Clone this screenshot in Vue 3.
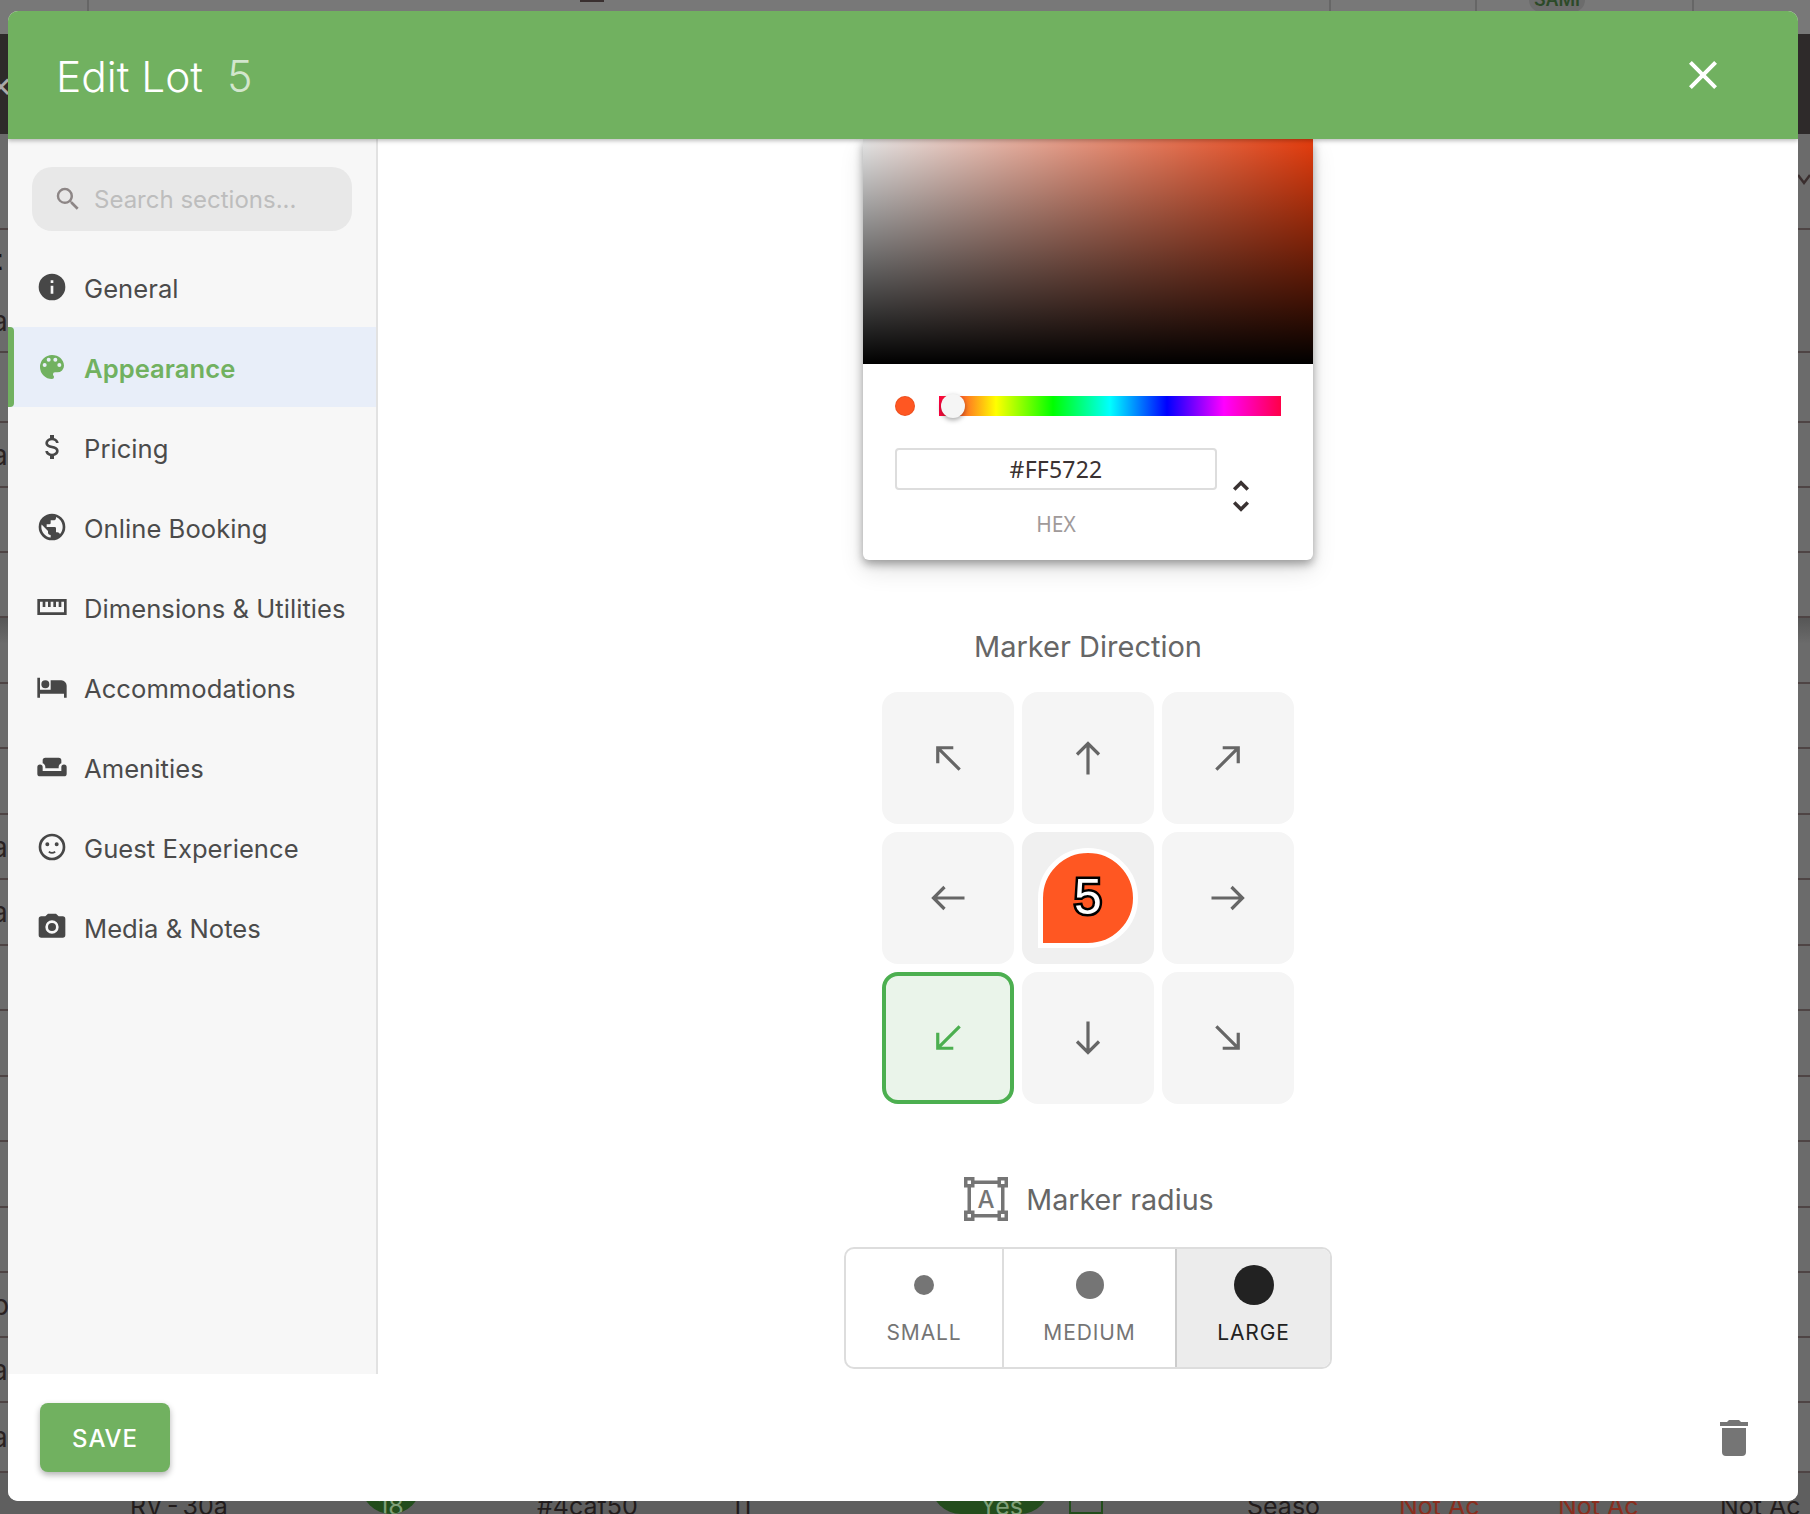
<template>
  <div class="page">
    <!-- table behind the dialog -->
    <div class="backdrop">
      <div class="top-band">
        <span v-for="c in topCells" :key="c.w" class="top-cell" :style="{ width: c.w + 'px' }">
          <span v-if="c.bar" class="top-bar"></span>
          <span v-if="c.pill" class="top-pill">SAMI</span>
        </span>
      </div>
      <div class="dark-band"><span>×</span></div>
      <div
        v-for="(row, i) in bgRows"
        :key="i"
        class="bg-row"
        :class="{ 'no-line': row.noLine, shade: row.shade }"
        :style="{ height: row.h + 'px' }"
      >
        <span class="bg-left" :class="{ strong: row.strong }">{{ row.l }}</span>
        <svg v-if="row.chevron" class="bg-chevron" viewBox="0 0 12 16"><polyline points="0,2 6,10 12,2" /></svg>
      </div>
      <div class="bg-last">
        <span
          v-for="c in lastCells"
          :key="c.left"
          class="bg-cell"
          :class="c.cls"
          :style="{ width: c.w + 'px' }"
        >{{ c.text }}</span>
      </div>
    </div>

    <div class="dialog">
      <header class="dialog-head">
        <h1>Edit Lot</h1>
        <span class="lot-no">5</span>
        <svg class="close" viewBox="0 0 24 24"><path :d="icons.close" /></svg>
      </header>

      <div class="dialog-body">
        <aside class="sidebar">
          <div class="search">
            <svg viewBox="0 0 24 24"><path :d="icons.magnify" /></svg>
            <span>Search sections...</span>
          </div>
          <div
            v-for="item in sections"
            :key="item.name"
            class="nav-item"
            :class="{ active: item.name === 'Appearance' }"
          >
            <svg viewBox="0 0 24 24">
              <path :d="icons[item.icon]" />
              <path v-if="item.icon === 'smile'" class="mouth" d="M9.6,15.6C11,16.6 13,16.6 14.4,15.6" />
            </svg>
            <span class="nav-text">{{ item.name }}</span>
          </div>
        </aside>

        <main class="content">
          <div class="picker">
            <div class="picker-canvas"></div>
            <div class="picker-panel">
              <div class="hue-row">
                <span class="hue-dot"></span>
                <div class="hue-track"><span class="hue-knob"></span></div>
              </div>
              <div class="hex-row">
                <div class="hex-col">
                  <div class="hex-input">#FF5722</div>
                  <div class="hex-label">HEX</div>
                </div>
                <svg class="hex-switch" viewBox="0 0 24 24"><path :d="icons.unfold" /></svg>
              </div>
            </div>
          </div>

          <div class="direction-title">Marker Direction</div>
          <div class="direction-grid">
            <div
              v-for="d in directions"
              :key="d.id"
              class="dir-btn"
              :class="{ selected: d.id === 'sw', center: d.id === 'c' }"
            >
              <div v-if="d.id === 'c'" class="marker"><span>5</span></div>
              <svg v-else class="arrow" viewBox="0 0 32 36" :style="{ transform: `rotate(${d.deg}deg)` }">
                <path d="M16,34.5V4M5,14.5L16,3.5L27,14.5" />
              </svg>
            </div>
          </div>

          <div class="radius-title">
            <svg viewBox="0 0 44 44">
              <path class="frame" d="M10,5.25H34M10,38.75H34M5.25,10V34M38.75,10V34" />
              <rect x="1.75" y="1.75" width="7" height="7" />
              <rect x="35.25" y="1.75" width="7" height="7" />
              <rect x="1.75" y="35.25" width="7" height="7" />
              <rect x="35.25" y="35.25" width="7" height="7" />
              <text x="22" y="31" text-anchor="middle">A</text>
            </svg>
            <span>Marker radius</span>
          </div>
          <div class="radius-toggle">
            <div
              v-for="r in radii"
              :key="r.label"
              class="radius-btn"
              :class="{ on: r.label === 'LARGE' }"
            >
              <span class="dot-box"><span class="dot" :style="{ width: r.size + 'px', height: r.size + 'px' }"></span></span>
              <span class="radius-label">{{ r.label }}</span>
            </div>
          </div>
        </main>
      </div>

      <footer class="dialog-foot">
        <button class="save">SAVE</button>
        <svg class="trash" viewBox="0 0 24 24"><path :d="icons.trash" /></svg>
      </footer>
    </div>
  </div>
</template>

<script setup>
const icons = {
  close: 'M19,6.41L17.59,5L12,10.59L6.41,5L5,6.41L10.59,12L5,17.59L6.41,19L12,13.41L17.59,19L19,17.59L13.41,12L19,6.41Z',
  magnify: 'M9.5,3A6.5,6.5 0 0,1 16,9.5C16,11.11 15.41,12.59 14.44,13.73L14.71,14H15.5L20.5,19L19,20.5L14,15.5V14.71L13.73,14.44C12.59,15.41 11.11,16 9.5,16A6.5,6.5 0 0,1 3,9.5A6.5,6.5 0 0,1 9.5,3M9.5,5C7,5 5,7 5,9.5C5,12 7,14 9.5,14C12,14 14,12 14,9.5C14,7 12,5 9.5,5Z',
  info: 'M13,9H11V7H13M13,17H11V11H13M12,2A10,10 0 0,0 2,12A10,10 0 0,0 12,22A10,10 0 0,0 22,12A10,10 0 0,0 12,2Z',
  palette: 'M17.5,12A1.5,1.5 0 0,1 16,10.5A1.5,1.5 0 0,1 17.5,9A1.5,1.5 0 0,1 19,10.5A1.5,1.5 0 0,1 17.5,12M14.5,8A1.5,1.5 0 0,1 13,6.5A1.5,1.5 0 0,1 14.5,5A1.5,1.5 0 0,1 16,6.5A1.5,1.5 0 0,1 14.5,8M9.5,8A1.5,1.5 0 0,1 8,6.5A1.5,1.5 0 0,1 9.5,5A1.5,1.5 0 0,1 11,6.5A1.5,1.5 0 0,1 9.5,8M6.5,12A1.5,1.5 0 0,1 5,10.5A1.5,1.5 0 0,1 6.5,9A1.5,1.5 0 0,1 8,10.5A1.5,1.5 0 0,1 6.5,12M12,3A9,9 0 0,0 3,12A9,9 0 0,0 12,21A1.5,1.5 0 0,0 13.5,19.5C13.5,19.11 13.35,18.76 13.11,18.5C12.88,18.23 12.73,17.88 12.73,17.5A1.5,1.5 0 0,1 14.23,16H16A5,5 0 0,0 21,11C21,6.58 16.97,3 12,3Z',
  dollar: 'M7,15H9C9,16.08 10.37,17 12,17C13.63,17 15,16.08 15,15C15,13.9 13.96,13.5 11.76,12.97C9.64,12.44 7,11.78 7,9C7,7.21 8.47,5.69 10.5,5.18V3H13.5V5.18C15.53,5.69 17,7.21 17,9H15C15,7.92 13.63,7 12,7C10.37,7 9,7.92 9,9C9,10.1 10.04,10.5 12.24,11.03C14.36,11.56 17,12.22 17,15C17,16.79 15.53,18.31 13.5,18.82V21H10.5V18.82C8.47,18.31 7,16.79 7,15Z',
  earth: 'M17.9,17.39C17.64,16.59 16.89,16 16,16H15V13A1,1 0 0,0 14,12H8V10H10A1,1 0 0,0 11,9V7H13A2,2 0 0,0 15,5V4.59C17.93,5.77 20,8.64 20,12C20,14.08 19.2,15.97 17.9,17.39M11,19.93C7.05,19.44 4,16.08 4,12C4,11.38 4.08,10.78 4.21,10.21L9,15V16A2,2 0 0,0 11,18M12,2A10,10 0 0,0 2,12A10,10 0 0,0 12,22A10,10 0 0,0 22,12A10,10 0 0,0 12,2Z',
  ruler: 'M1,6V18H23V6H1M21,16H3V8H5V12H7V8H9V12H11V8H13V12H15V8H17V12H19V8H21V16Z',
  bed: 'M19,7H11V14H3V5H1V20H3V17H21V20H23V11A4,4 0 0,0 19,7M7,13A3,3 0 0,0 10,10A3,3 0 0,0 7,7A3,3 0 0,0 4,10A3,3 0 0,0 7,13Z',
  sofa: 'M7,5H17A2,2 0 0,1 19,7V9.2C17.84,9.6 17,10.7 17,12V13H7V12C7,10.7 6.16,9.6 5,9.2V7A2,2 0 0,1 7,5ZM3,10.2A2,2 0 0,1 5,12.2V15H19V12.2A2,2 0 0,1 21,10.2A2,2 0 0,1 23,12.2V17A2,2 0 0,1 21,19H3A2,2 0 0,1 1,17V12.2A2,2 0 0,1 3,10.2Z',
  smile: 'M12,2A10,10 0 0,0 2,12A10,10 0 0,0 12,22A10,10 0 0,0 22,12A10,10 0 0,0 12,2M12,20A8,8 0 0,1 4,12A8,8 0 0,1 12,4A8,8 0 0,1 20,12A8,8 0 0,1 12,20M8.5,8.5A1.5,1.5 0 0,0 7,10A1.5,1.5 0 0,0 8.5,11.5A1.5,1.5 0 0,0 10,10A1.5,1.5 0 0,0 8.5,8.5M15.5,8.5A1.5,1.5 0 0,0 14,10A1.5,1.5 0 0,0 15.5,11.5A1.5,1.5 0 0,0 17,10A1.5,1.5 0 0,0 15.5,8.5Z',
  camera: 'M4,4H7L9,2H15L17,4H20A2,2 0 0,1 22,6V18A2,2 0 0,1 20,20H4A2,2 0 0,1 2,18V6A2,2 0 0,1 4,4M12,7A5,5 0 0,0 7,12A5,5 0 0,0 12,17A5,5 0 0,0 17,12A5,5 0 0,0 12,7M12,9A3,3 0 0,1 15,12A3,3 0 0,1 12,15A3,3 0 0,1 9,12A3,3 0 0,1 12,9Z',
  unfold: 'M12,18.17L8.83,15L7.41,16.41L12,21L16.59,16.41L15.17,15M12,5.83L15.17,9L16.59,7.59L12,3L7.41,7.59L8.83,9L12,5.83Z',
  trash: 'M19,4H15.5L14.5,3H9.5L8.5,4H5V6H19M6,19A2,2 0 0,0 8,21H16A2,2 0 0,0 18,19V7H6V19Z'
}

const sections = [
  { name: 'General', icon: 'info' },
  { name: 'Appearance', icon: 'palette' },
  { name: 'Pricing', icon: 'dollar' },
  { name: 'Online Booking', icon: 'earth' },
  { name: 'Dimensions & Utilities', icon: 'ruler' },
  { name: 'Accommodations', icon: 'bed' },
  { name: 'Amenities', icon: 'sofa' },
  { name: 'Guest Experience', icon: 'smile' },
  { name: 'Media & Notes', icon: 'camera' }
]

const directions = [
  { id: 'nw', deg: -45 },
  { id: 'n', deg: 0 },
  { id: 'ne', deg: 45 },
  { id: 'w', deg: -90 },
  { id: 'c', deg: 0 },
  { id: 'e', deg: 90 },
  { id: 'sw', deg: -135 },
  { id: 's', deg: 180 },
  { id: 'se', deg: 135 }
]

const radii = [
  { label: 'SMALL', size: 20 },
  { label: 'MEDIUM', size: 28 },
  { label: 'LARGE', size: 40 }
]

// background table, only the bits showing around the dialog
const topCells = [
  { w: 89 },
  { w: 1242, bar: true },
  { w: 146 },
  { w: 217, pill: true }
]
const bgRows = [
  { h: 96, l: '', chevron: true },
  { h: 60, l: 't', noLine: true, strong: true },
  { h: 63, l: 'a' },
  { h: 70, l: '' },
  { h: 65, l: 'a' },
  { h: 65, l: '' },
  { h: 65, l: '' },
  { h: 66, l: '', shade: true },
  { h: 65, l: '' },
  { h: 66, l: '' },
  { h: 65, l: 'a' },
  { h: 66, l: 'a' },
  { h: 65, l: '' },
  { h: 66, l: '' },
  { h: 65, l: '' },
  { h: 66, l: '' },
  { h: 65, l: '' },
  { h: 65, l: 'b' },
  { h: 65, l: 'a' },
  { h: 70, l: 'a' }
]
const lastCells = [
  { left: 0, w: 130, text: '' },
  { left: 130, w: 231, text: 'RV - 30a', cls: 'tight' },
  { left: 361, w: 60, text: '18', cls: 'green drop' },
  { left: 421, w: 84, text: '' },
  { left: 505, w: 23, text: '', cls: 'swatch' },
  { left: 528, w: 9, text: '' },
  { left: 537, w: 194, text: '#4caf50' },
  { left: 731, w: 200, text: '11' },
  { left: 931, w: 119, text: 'Yes', cls: 'green pill' },
  { left: 1050, w: 19, text: '' },
  { left: 1069, w: 34, text: '', cls: 'box' },
  { left: 1103, w: 144, text: '' },
  { left: 1247, w: 152, text: 'Seaso' },
  { left: 1399, w: 159, text: 'Not Ac', cls: 'red' },
  { left: 1558, w: 162, text: 'Not Ac', cls: 'red' },
  { left: 1720, w: 90, text: 'Not Ac' }
]
</script>

<style>
html,
body {
  margin: 0;
  background: #6b6b6b;
}
</style>

<style scoped>
.page {
  position: relative;
  width: 1810px;
  height: 1514px;
  overflow: hidden;
  font-family: Inter, "Liberation Sans", sans-serif;
  padding: 11px 12px 13px 8px;
  box-sizing: border-box;
}

/* backdrop */
.backdrop {
  position: absolute;
  inset: 0;
  background: #6b6b6b;
  overflow: hidden;
}
.top-band {
  display: flex;
  height: 34px;
  background: #787878;
}
.top-cell {
  display: block;
  box-sizing: border-box;
  height: 100%;
  border-right: 2px solid #666;
  overflow: hidden;
}
.top-bar {
  display: block;
  width: 24px;
  height: 2px;
  margin-left: 491px;
  background: #3a3030;
}
.top-pill {
  display: block;
  width: 56px;
  height: 12px;
  margin-left: 52px;
  border-radius: 0 0 26px 26px;
  background: #6c6c6c;
  color: #2c4a28;
  font-size: 18px;
  font-weight: 600;
  line-height: 0;
  text-align: center;
  overflow: hidden;
}
.dark-band {
  display: flex;
  align-items: center;
  height: 100px;
  background: #2e2a2a;
}
.dark-band span {
  margin-left: -11px;
  font-size: 36px;
  color: #a8a8a8;
}
.bg-row {
  box-sizing: border-box;
  display: flex;
  align-items: center;
  justify-content: space-between;
  border-bottom: 2px solid #4e4444;
}
.bg-row.no-line {
  border-bottom: 0;
}
.bg-row.shade {
  background: linear-gradient(180deg, #565656, #6b6b6b 40%);
}
.bg-left {
  margin-left: -8px;
  font-size: 28px;
  color: #2a2222;
}
.bg-left.strong {
  font-weight: 700;
  color: #1a1212;
}
.bg-chevron {
  width: 12px;
  height: 16px;
}
.bg-chevron polyline {
  fill: none;
  stroke: #3a2e2e;
  stroke-width: 2.5;
}
.bg-last {
  display: flex;
  height: 41px;
  background: #5f5f5f;
  padding-top: 18px;
  box-sizing: border-box;
}
.bg-cell {
  display: block;
  flex: none;
  font-size: 25px;
  line-height: 30px;
  color: #221c1c;
  white-space: nowrap;
  overflow: hidden;
}
.bg-cell.tight {
  word-spacing: -3px;
}
.bg-cell.green {
  background: #234d1c;
  color: #7fa078;
  text-align: center;
}
.bg-cell.drop {
  margin-top: -18px;
  padding-top: 18px;
  border-radius: 0 0 30px 30px;
}
.bg-cell.pill {
  margin-top: -18px;
  padding: 18px 0 0 22px;
  box-sizing: border-box;
  border-radius: 0 0 30px 30px;
}
.bg-cell.swatch {
  height: 20px;
  margin-top: -18px;
  border-radius: 0 0 12px 12px;
  background: #234d1c;
}
.bg-cell.box {
  box-sizing: border-box;
  margin-top: -18px;
  border: 2px solid #234d1c;
}
.bg-cell.red {
  color: #8a2e1e;
}

/* dialog */
.dialog {
  position: relative;
  display: flex;
  flex-direction: column;
  height: 1490px;
  background: #fff;
  border-radius: 10px;
  overflow: hidden;
}
.dialog-head {
  position: relative;
  z-index: 2;
  flex: none;
  display: flex;
  align-items: center;
  height: 128px;
  padding: 0 56px 0 48px;
  box-sizing: border-box;
  background: #71b160;
  color: #fff;
  box-shadow: 0 2px 4px rgba(0, 0, 0, 0.25);
}
.dialog-head h1 {
  margin: 2px 0 0;
  font-size: 42.4px;
  font-weight: 300;
}
.lot-no {
  margin: 2px 0 0 24px;
  font-size: 43px;
  font-weight: 300;
  color: rgba(255, 255, 255, 0.7);
}
.close {
  width: 48px;
  height: 48px;
  margin-left: auto;
  margin-right: 15px;
  fill: #fff;
}

.dialog-body {
  flex: 1;
  min-height: 0;
  display: flex;
}
.sidebar {
  flex: none;
  width: 370px;
  box-sizing: border-box;
  background: #f7f7f7;
  border-right: 2px solid #e2e2e2;
  padding-top: 28px;
}
.search {
  display: flex;
  align-items: center;
  gap: 11px;
  width: 320px;
  height: 64px;
  margin: 0 0 16px 24px;
  padding-left: 21px;
  box-sizing: border-box;
  border-radius: 20px;
  background: #e8e8e8;
  font-size: 24px;
  color: #bdbdbd;
}
.search svg {
  width: 30px;
  height: 30px;
  fill: #8d8686;
}
.nav-item {
  position: relative;
  display: flex;
  align-items: center;
  gap: 16px;
  height: 80px;
  padding-left: 28px;
  font-size: 25.6px;
  letter-spacing: 0.04px;
  color: #4b4b4b;
}
.nav-text {
  padding-top: 2px;
}
.nav-item svg {
  flex: none;
  width: 32px;
  height: 32px;
  fill: #474747;
  overflow: visible;
}
.nav-item .mouth {
  fill: none;
  stroke: #474747;
  stroke-width: 1.3;
}
.nav-item.active {
  background: #e8eef9;
  color: #71b160;
  font-weight: 600;
}
.nav-item.active svg {
  fill: #71b160;
}
.nav-item.active::before {
  content: "";
  position: absolute;
  left: 0;
  top: 0;
  bottom: 0;
  width: 6px;
  border-radius: 0 4px 4px 0;
  background: #71b160;
}

.content {
  flex: 1;
  display: flex;
  flex-direction: column;
  align-items: center;
  min-width: 0;
  color: #666;
}
.picker {
  flex: none;
  width: 450px;
  border-radius: 0 0 6px 6px;
  background: #fff;
  box-shadow: 0 4px 10px rgba(0, 0, 0, 0.35), 0 10px 24px rgba(0, 0, 0, 0.12);
}
.picker-canvas {
  height: 225px;
  background:
    linear-gradient(180deg, rgba(0, 0, 0, 0.1), #000),
    linear-gradient(90deg, #fff, rgba(255, 255, 255, 0)),
    #ff4410;
}
.picker-panel {
  padding: 32px 32px 22px;
}
.hue-row {
  display: flex;
  align-items: center;
  gap: 24px;
}
.hue-dot {
  flex: none;
  width: 20px;
  height: 20px;
  border-radius: 50%;
  background: #ff5722;
  box-shadow: inset 0 0 0 1px rgba(0, 0, 0, 0.08);
}
.hue-track {
  position: relative;
  flex: 1;
  height: 20px;
  background: linear-gradient(90deg, #ff0040, #ff0 16.67%, #0f0 33.33%, #0ff 50%, #00f 66.67%, #f0f 83.33%, #ff0048);
}
.hue-knob {
  position: absolute;
  left: 2px;
  top: -2px;
  width: 24px;
  height: 24px;
  border-radius: 50%;
  background: #f5f5f5;
  box-shadow: 0 2px 5px rgba(0, 0, 0, 0.35);
}
.hex-row {
  display: flex;
  margin-top: 32px;
}
.hex-col {
  width: 322px;
  flex: none;
}
.hex-input {
  height: 42px;
  line-height: 38px;
  box-sizing: border-box;
  border: 2px solid #ddd;
  border-radius: 4px;
  text-align: center;
  font-family: "Noto Sans", sans-serif;
  font-size: 23px;
  letter-spacing: 0.2px;
  color: #3a3232;
}
.hex-label {
  margin-top: 20px;
  line-height: 28px;
  text-align: center;
  font-family: "Noto Sans", sans-serif;
  font-size: 21px;
  color: #a09a9a;
}
.hex-switch {
  flex: none;
  width: 42px;
  height: 42px;
  margin: 27px 0 0 3px;
  fill: #3a3232;
}

.direction-title {
  margin-top: 67px;
  line-height: 40px;
  font-size: 29px;
}
.direction-grid {
  display: grid;
  grid-template-columns: repeat(3, 132px);
  grid-auto-rows: 132px;
  gap: 8px;
  margin-top: 25px;
}
.dir-btn {
  display: flex;
  align-items: center;
  justify-content: center;
  box-sizing: border-box;
  border-radius: 16px;
  background: #f5f5f5;
}
.dir-btn.center {
  background: #f0f0f0;
}
.dir-btn.selected {
  background: #eaf4ea;
  border: 4px solid #4caf50;
}
.arrow {
  width: 32px;
  height: 36px;
  overflow: visible;
}
.arrow path {
  fill: none;
  stroke: #666;
  stroke-width: 3.2;
}
.dir-btn.selected .arrow path {
  stroke: #4caf50;
}
.marker {
  display: flex;
  align-items: center;
  justify-content: center;
  width: 100px;
  height: 100px;
  box-sizing: border-box;
  border: 5px solid #fff;
  border-radius: 50% 50% 50% 0;
  background: #ff5722;
}
.marker span {
  margin-bottom: 2px;
  font-family: "Liberation Sans", Arial, sans-serif;
  font-size: 50px;
  line-height: 1;
  color: #fff;
  -webkit-text-stroke: 5px #000;
  paint-order: stroke fill;
}

.radius-title {
  display: flex;
  align-items: center;
  gap: 18px;
  margin-top: 73px;
  margin-left: 2px;
  height: 44px;
  font-size: 28.7px;
}
.radius-title svg {
  width: 44px;
  height: 44px;
}
.radius-title rect,
.radius-title .frame {
  fill: none;
  stroke: #757575;
  stroke-width: 3.5;
}
.radius-title text {
  font-family: Inter, sans-serif;
  font-size: 24px;
  font-weight: 500;
  fill: #757575;
}
.radius-toggle {
  display: grid;
  grid-template-columns: 156px 173px 1fr;
  width: 488px;
  margin-top: 26px;
  height: 122px;
  box-sizing: border-box;
  border: 2px solid #ddd;
  border-radius: 10px;
  overflow: hidden;
}
.radius-btn {
  display: flex;
  flex-direction: column;
  align-items: center;
  padding-top: 16px;
  box-sizing: border-box;
  border-left: 2px solid #ddd;
  color: #757575;
}
.radius-btn:first-child {
  border-left: 0;
}
.radius-btn.on {
  background: #ececec;
  border-left-color: #ccc;
  color: #222;
}
.dot-box {
  display: flex;
  align-items: center;
  justify-content: center;
  height: 40px;
}
.dot {
  display: block;
  border-radius: 50%;
  background: currentColor;
}
.radius-label {
  margin-top: 14px;
  line-height: 28px;
  font-size: 21px;
  letter-spacing: 0.9px;
}

.dialog-foot {
  flex: none;
  display: flex;
  align-items: center;
  justify-content: space-between;
  height: 127px;
  padding: 0 40px 0 32px;
  box-sizing: border-box;
  background: #fff;
}
.save {
  width: 130px;
  height: 69px;
  padding-top: 2px;
  border: 0;
  border-radius: 8px;
  background: #71b160;
  color: #fff;
  font-family: Inter, sans-serif;
  font-size: 24px;
  font-weight: 500;
  letter-spacing: 0.9px;
  box-shadow: 0 3px 6px rgba(0, 0, 0, 0.3);
}
.trash {
  width: 48px;
  height: 48px;
  fill: #757575;
}
</style>
